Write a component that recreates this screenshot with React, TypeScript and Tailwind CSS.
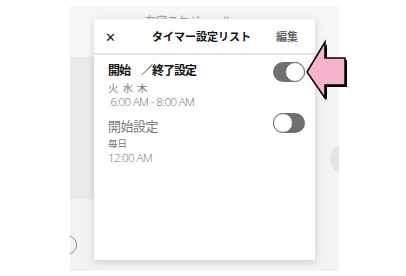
const jp = "font-['Noto_Sans_CJK_JP','Noto_Sans',sans-serif]";

const Toggle = ({ on, className = "" }: { on: boolean; className?: string }) => (
  <div
    className={`flex h-[20px] w-[32px] shrink-0 rounded-full bg-[#707070] ${
      on ? "justify-end" : "justify-start"
    } ${className}`}
  >
    <div className="h-[20px] w-[20px] rounded-full border border-[#707070] bg-white" />
  </div>
);

const PointerArrow = () => (
  <svg
    className="absolute left-[303px] top-[38px]"
    width="48"
    height="66"
    viewBox="0 0 48 66"
  >
    <polygon
      points="6,36 24,6 24,22 44,22 44,49 24,49 24,62"
      fill="#000"
    />
    <polygon
      points="4,34 22,4 22,20 42,20 42,47 22,47 22,60"
      fill="#f4b4cd"
      stroke="#000"
      strokeWidth="1.5"
      strokeLinejoin="miter"
    />
  </svg>
);

const TimerRow = ({
  title,
  days,
  time,
  on,
}: {
  title: string;
  days: string;
  time: string;
  on: boolean;
}) => (
  <div className="flex items-start justify-between pl-[14px] pr-[10px]">
    <div className="flex flex-col">
      <span
        className={
          on
            ? "text-[12px] font-bold leading-[18px] tracking-[-1px] text-[#111]"
            : "text-[13px] leading-[18px] tracking-[-0.5px] text-[#7a7a7a]"
        }
      >
        {title}
      </span>
      <span
        className={
          on
            ? "mt-[1px] text-[10.5px] leading-[15px] tracking-[4px] text-[#777]"
            : "mt-[1px] text-[9.5px] leading-[14px] text-[#777]"
        }
      >
        {days}
      </span>
      <span
        className={`whitespace-pre font-['Open_Sans',sans-serif] text-[11.5px] font-light tracking-[-0.6px] text-[#6f6f6f] ${
          on ? "-mt-[1px] leading-[15px]" : "leading-[16px]"
        }`}
      >
        {time}
      </span>
    </div>
    <Toggle on={on} className={on ? "mt-[1px]" : "-mt-[4px]"} />
  </div>
);

export default function App() {
  return (
    <div className={`relative h-[276px] w-[406px] bg-white pl-[70px] pt-[6px] ${jp}`}>
      <div className="relative flex h-[265px] w-[269px] flex-col overflow-hidden bg-[#f2f3f3]">
        <div className="flex h-[51px] shrink-0 items-start bg-[#f5f6f6] pl-[68px] pt-[6px] text-[11px] leading-[16px] text-[#9a9a9a]">
          <span className="mr-[4px]">‹</span>
          <span>在宅スケジュール</span>
        </div>
        <div className="flex h-[142px] shrink-0">
          <div className="w-[245px] shrink-0 bg-[#e9eaea]" />
          <div className="ml-[15px] mt-[88px] h-[28px] w-[28px] shrink-0 rounded-full bg-[#e4e4e4]" />
        </div>
        <div className="flex">
          <div className="-ml-[13px] mt-[36px] h-[20px] w-[20px] shrink-0 rounded-full border border-[#8a8a8a]" />
        </div>

        <div className="absolute left-[24px] top-[13px] flex h-[241px] w-[221px] flex-col bg-white shadow-[0_2px_8px_rgba(0,0,0,0.16)]">
          <div className="grid h-[36px] shrink-0 grid-cols-[1fr_auto_1fr] items-center border-b-2 border-[#e2e2e2] pl-[11px] pr-[17px]">
            <span className="text-[13px] leading-none text-[#222]">✕</span>
            <span className="text-[11px] font-bold text-[#111]">
              タイマー設定リスト
            </span>
            <span className="justify-self-end text-[11px] font-bold text-[#666]">
              編集
            </span>
          </div>
          <div className="flex flex-col gap-[8px] pt-[6px]">
            <TimerRow
              title="開始　／終了設定"
              days="火水木"
              time=" 6:00 AM - 8:00 AM"
              on
            />
            <TimerRow
              title="開始設定"
              days="毎日"
              time="12:00 AM"
              on={false}
            />
          </div>
        </div>
      </div>
      <PointerArrow />
    </div>
  );
}
